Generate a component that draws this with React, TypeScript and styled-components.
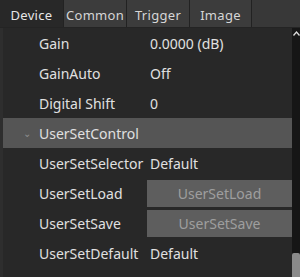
import React from 'react';
import styled, { createGlobalStyle } from 'styled-components';

const Global = createGlobalStyle`
  html, body { margin: 0; padding: 0; background: #282828; }
  body { font-family: "Noto Sans", "Open Sans", sans-serif; font-size: 14px; color: #e0e0e0; }
`;

const Frame = styled.div`
  width: 300px;
  height: 277px;
  display: flex;
  flex-direction: column;
  overflow: hidden;
  background: #282828;
`;

const TabBar = styled.div`
  display: flex;
  height: 28px;
  background: #383838;
  border-bottom: 1px solid #242424;
  box-sizing: border-box;
`;

const Tab = styled.div<{ active?: boolean; w: number }>`
  width: ${p => p.w}px;
  box-sizing: border-box;
  display: flex;
  align-items: center;
  justify-content: center;
  padding-top: 3px;
  background: ${p => (p.active ? '#282828' : '#3c3c3c')};
  border-right: 1px solid #222;
  color: ${p => (p.active ? '#e6e6e6' : '#d6d6d6')};
  font-size: 13px;
  letter-spacing: 0.3px;
`;

const Body = styled.div`
  flex: 1;
  display: flex;
  min-height: 0;
`;

const Tree = styled.div`
  width: 292px;
  display: flex;
  flex-direction: column;
  border-left: 3px solid #2e2e2e;
  box-sizing: border-box;
`;

const Row = styled.div<{ group?: boolean }>`
  height: 30px;
  flex-shrink: 0;
  display: grid;
  grid-template-columns: 144px 1fr;
  align-items: center;
  background: ${p => (p.group ? '#555555' : 'transparent')};
`;

const Label = styled.div`
  padding-left: 36px;
  display: flex;
  align-items: center;
  position: relative;
  white-space: nowrap;
`;

const Chevron = styled.span`
  position: absolute;
  left: 20px;
  top: 2px;
  color: #8e8e8e;
  font-size: 10px;
`;

const Value = styled.div`
  padding-left: 3px;
  white-space: nowrap;
`;

const Button = styled.div`
  height: 27px;
  background: #5e5e5e;
  color: #9e9e9e;
  display: flex;
  align-items: center;
  justify-content: center;
`;

const Scrollbar = styled.div`
  width: 8px;
  background: #161616;
  display: flex;
  flex-direction: column;
  justify-content: space-between;
  align-items: center;
`;

const Arrow = styled.svg`
  margin-top: 3px;
`;

const Thumb = styled.div`
  width: 8px;
  height: 24px;
  background: #8a8a8a;
  border-radius: 2px 2px 0 0;
`;

const tabs = [
  { name: 'Device', w: 64 },
  { name: 'Common', w: 63 },
  { name: 'Trigger', w: 63 },
  { name: 'Image', w: 62 },
];

type Item = { label: string; value?: string; button?: string; group?: boolean };

const items: Item[] = [
  { label: 'Gain', value: '0.0000 (dB)' },
  { label: 'GainAuto', value: 'Off' },
  { label: 'Digital Shift', value: '0' },
  { label: 'UserSetControl', group: true },
  { label: 'UserSetSelector', value: 'Default' },
  { label: 'UserSetLoad', button: 'UserSetLoad' },
  { label: 'UserSetSave', button: 'UserSetSave' },
  { label: 'UserSetDefault', value: 'Default' },
];

export default function App() {
  return (
    <>
      <Global />
      <Frame>
        <TabBar>
          {tabs.map((t, i) => (
            <Tab key={t.name} w={t.w} active={i === 0}>
              {t.name}
            </Tab>
          ))}
        </TabBar>
        <Body>
          <Tree>
            {items.map(it => (
              <Row key={it.label} group={it.group}>
                <Label>
                  {it.group && <Chevron>⌄</Chevron>}
                  {it.label}
                </Label>
                {it.button ? (
                  <Button>{it.button}</Button>
                ) : (
                  <Value>{it.value}</Value>
                )}
              </Row>
            ))}
          </Tree>
          <Scrollbar>
            <Arrow width="7" height="5" viewBox="0 0 7 5">
              <path d="M0.5 4.5 L3.5 1 L6.5 4.5" stroke="#dcdcdc" strokeWidth="1.3" fill="none" />
            </Arrow>
            <Thumb />
          </Scrollbar>
        </Body>
      </Frame>
    </>
  );
}
